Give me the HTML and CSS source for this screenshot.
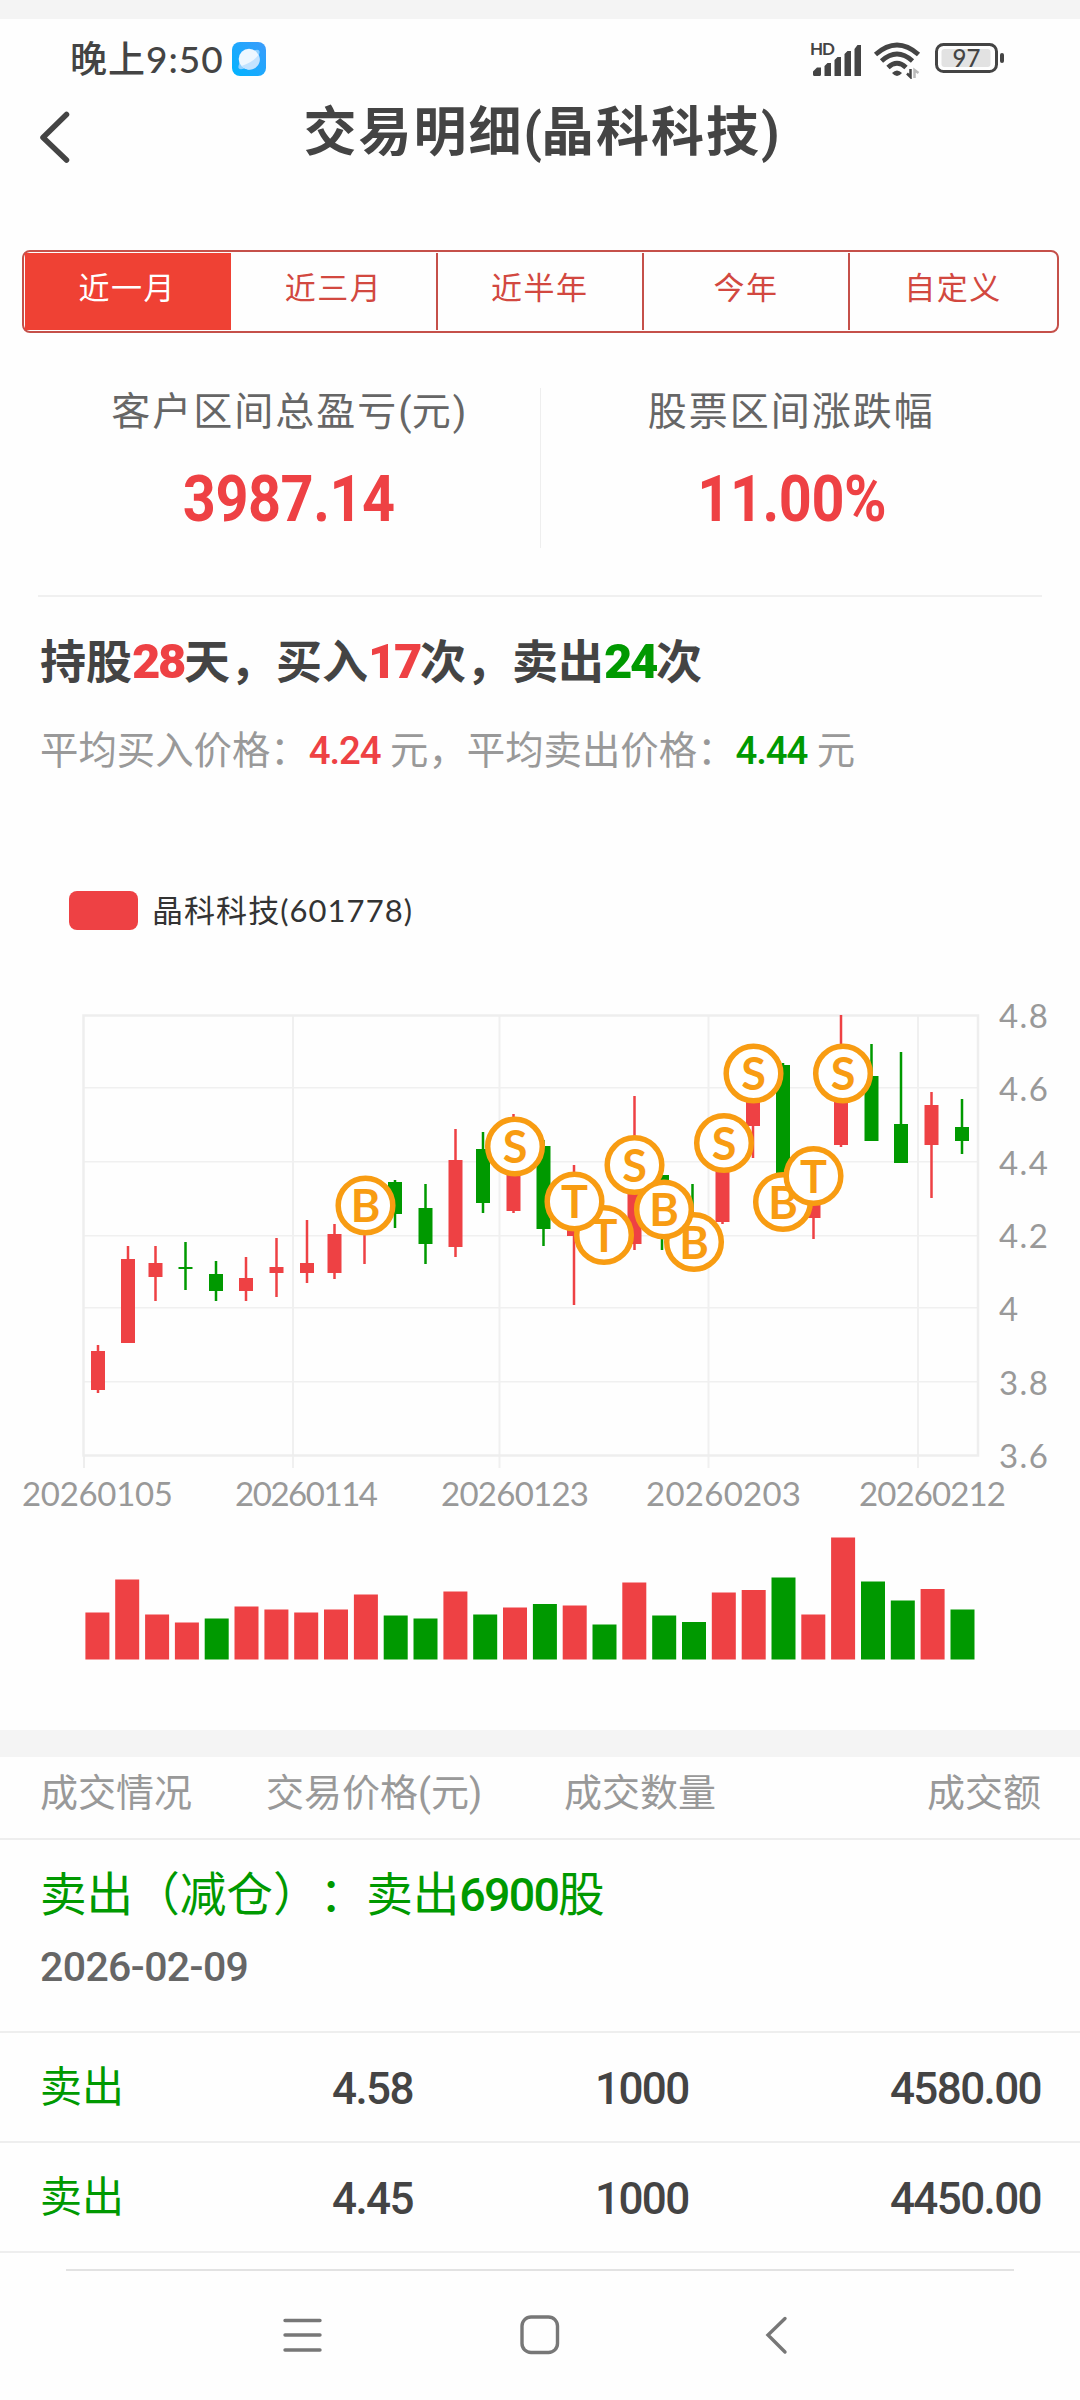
FILE: index.html
```html
<!DOCTYPE html>
<html lang="zh-CN">
<head>
	<meta charset="utf-8">
	<title>交易明细</title>
	<link rel="stylesheet" href="styles.css">
</head>
<body>
	<div class="top_strip"></div>
	<div class="status_bar">
		<span class="time">晚上9:50</span>
		<svg class="app_icon" width="34" height="34" viewBox="0 0 34 34">
			<defs>
				<linearGradient id="sky" x1="0" y1="1" x2="1" y2="0"><stop offset="0" stop-color="#00b4ff"/><stop offset="1" stop-color="#3d9bfb"/></linearGradient>
			</defs>
			<rect width="34" height="34" rx="8" fill="url(#sky)"/>
			<ellipse cx="17" cy="17.500" rx="13.500" ry="5" transform="rotate(-42 17 17.500)" fill="#8fd0ff"/>
			<circle cx="17" cy="17" r="10.300" fill="#eef7ff"/>
			<path d="M9.500 24Q22 20 26.500 12.500A10.300 10.300 0 0 1 9.500 24Z" fill="#c3e3ff"/>
		</svg>
		<svg class="signals" width="200" height="40" viewBox="808 40 200 40">
			<text class="hd" x="810" y="55.500" textLength="25">HD</text>
			<g fill="#444">
				<path d="M813 75.500v-3l4-4h4v7q0 1.500-1.500 1.500h-5q-1.500 0-1.500-1.500zM824.500 77v-10l3-3h3.500v13zM834.500 77v-16l3-3h3.500v19zM844.500 77v-22l3-3h3.500v25zM854.500 77v-27l3-4h3.500v31z"/>
				<path d="M892 74Q897 69 902 74Q897 80 892 74z"/>
			</g>
			<g fill="none" stroke="#444" stroke-width="4.800">
				<path d="M875.500 55.500Q897 36.500 918.500 55.500"/>
				<path d="M881.500 62Q897 48 912.500 62"/>
				<path d="M888 68.500Q897 60 906 68.500"/>
			</g>
			<path d="M910.500 70v8l-3.500-3.500" fill="none" stroke="#444" stroke-width="2.500"/>
			<path d="M914.500 79v-8l4 3" fill="none" stroke="#bbb" stroke-width="2.500"/>
			<rect x="936.500" y="45.500" width="60" height="27" rx="7" fill="none" stroke="#444" stroke-width="3"/>
			<rect x="941.500" y="50" width="49" height="18" rx="3" fill="#e2e2e2"/>
			<rect x="1000" y="54" width="4" height="10" rx="2" fill="#444"/>
			<text class="battery" x="966.500" y="67.500" text-anchor="middle">97</text>
		</svg>
	</div>

	<div class="header">
		<svg class="back" width="32" height="54" viewBox="0 0 32 54"><path d="M28.500 4.500L5 27.500L28.500 50" fill="none" stroke="#444" stroke-width="5.500" stroke-linecap="round" stroke-linejoin="round"/></svg>
		<h1>交易明细<i>(</i>晶科科技<i>)</i></h1>
	</div>

	<div class="tabs">
		<div class="tab active">近一月</div>
		<div class="tab">近三月</div>
		<div class="tab">近半年</div>
		<div class="tab">今年</div>
		<div class="tab">自定义</div>
	</div>

	<div class="stats">
		<div class="stat">
			<div class="label">客户区间总盈亏<i>(</i>元<i>)</i></div>
			<div class="value">3987.14</div>
		</div>
		<div class="stat">
			<div class="label">股票区间涨跌幅</div>
			<div class="value">11.00%</div>
		</div>
	</div>

	<div class="summary">
		<div class="counts">持股<b class="red">28</b>天，买入<b class="red">17</b>次，卖出<b class="green">24</b>次</div>
		<div class="prices">平均买入价格：<b class="red">4.24</b> 元，平均卖出价格：<b class="green">4.44</b> 元</div>
	</div>

	<svg class="chart" id="chart" width="1080" height="860" viewBox="0 870 1080 860"></svg>

	<div class="gap"></div>
	<div class="row table_head">
		<span>成交情况</span><span>交易价格<i>(</i>元<i>)</i></span><span>成交数量</span><span>成交额</span>
	</div>
	<div class="group">
		<div class="group_title">卖出（减仓）：卖出<b>6900</b>股</div>
		<div class="group_date">2026-02-09</div>
	</div>
	<div class="row trade">
		<span class="green">卖出</span><span>4.58</span><span>1000</span><span>4580.00</span>
	</div>
	<div class="row trade">
		<span class="green">卖出</span><span>4.45</span><span>1000</span><span>4450.00</span>
	</div>

	<div class="nav_bar">
		<svg width="40" height="40" viewBox="0 0 40 40"><path d="M3 5.500H38M3 20H38M3 35H38" stroke="#777" stroke-width="3.400" stroke-linecap="round"/></svg>
		<svg width="40" height="40" viewBox="0 0 40 40"><rect x="2" y="2" width="35.500" height="35.500" rx="9" fill="none" stroke="#777" stroke-width="3.400"/></svg>
		<svg width="40" height="40" viewBox="0 0 40 40"><path d="M27 3.500L10 20L27 37" fill="none" stroke="#777" stroke-width="3.400" stroke-linecap="round"/></svg>
	</div>

	<script src="chart.js"></script>
</body>
</html>
```
FILE: styles.css
```css
* {
	box-sizing: border-box;
}
body {
	margin: 0;
	width: 1080px;
	height: 2400px;
	overflow: hidden;
	background-color: #fefefe;
	color: #444;
	font-family: Roboto, "Noto Sans CJK SC", sans-serif;
}
i {
	font-style: normal;
}
.red {
	color: #ee4144;
}
.green {
	color: #009900;
}
.top_strip {
	height: 19px;
	background-color: #f4f4f4;
}
.status_bar {
	height: 81px;
	display: flex;
	align-items: center;
	padding: 0 72px 2px 70px;
}
.time {
	font: 500 37px/40px Lato, "Noto Sans CJK SC", sans-serif;
	letter-spacing: 1px;
	width: 162px;
	white-space: nowrap;
}
.signals {
	margin-left: auto;
}
.hd {
	font: bold 17px Lato, sans-serif;
	fill: #444;
}
.battery {
	font: 500 24px Lato, sans-serif;
	fill: #444;
}
.header {
	height: 150px;
	display: flex;
	padding: 0 38px;
}
.back {
	margin-top: 10px;
}
h1 {
	flex: 1;
	margin: 1px 30px 0 0;
	font-size: 53px;
	line-height: 64px;
	letter-spacing: 2px;
	text-align: center;
}
h1 i {
	letter-spacing: -1px;
}
.tabs {
	display: flex;
	margin: 0 21px 0 22px;
	height: 83px;
	border: 2px solid #c5504a;
	border-radius: 8px;
	padding: 1px;
}
.tab {
	width: 206.3px;
	border-right: 2px solid #c5504a;
	color: #d24840;
	font-size: 31px;
	line-height: 71px;
	letter-spacing: 1.5px;
	text-align: center;
}
.tab:last-child {
	flex: 1;
	border-right: 0;
}
.tab.active {
	background-color: #ef4134;
	border-color: #ef4134;
	color: #fff;
}
.stats {
	display: flex;
	height: 264px;
	margin: 0 38px;
	padding-top: 55px;
	border-bottom: 2px solid #f0f0f0;
}
.stat {
	flex: 1;
	height: 160px;
	text-align: center;
}
.stat:first-child {
	border-right: 1px solid #eee;
}
.label {
	color: #666;
	font-size: 39px;
	line-height: 48px;
	letter-spacing: 2px;
}
.label i {
	letter-spacing: 0;
}
.value {
	margin-top: 32px;
	color: #ee4144;
	font-size: 64px;
	font-weight: bold;
	line-height: 64px;
	letter-spacing: -0.5px;
	transform: scaleX(0.9);
}
.summary {
	height: 273px;
	padding: 35px 40px;
}
.counts {
	font-size: 46px;
	font-weight: bold;
	line-height: 60px;
}
.counts b {
	font-size: 49px;
	letter-spacing: -2.4px;
}
.prices {
	margin-top: 29px;
	color: #999;
	font-size: 38.4px;
	line-height: 60px;
}
.prices b {
	font-weight: 500;
	letter-spacing: -1.1px;
}
.chart {
	display: block;
}
.axis {
	font: 33px Lato, sans-serif;
	fill: #999;
}
.legend {
	font: 31px Lato, "Noto Sans CJK SC", sans-serif;
	fill: #333;
}
.mark {
	font: bold 45px Lato, sans-serif;
	fill: #f89c12;
}
.gap {
	height: 27px;
	background-color: #f4f4f4;
}
.row {
	display: grid;
	grid-template-columns: 226px 298px 220px 1fr;
	align-items: center;
	padding: 0 39px 0 40px;
	height: 110px;
	border-bottom: 2px solid #eee;
}
.row span:last-child {
	text-align: right;
}
.table_head {
	height: 83px;
	padding-bottom: 16px;
	color: #999;
	font-size: 38px;
}
.group {
	height: 193px;
	padding: 25px 40px;
	border-bottom: 2px solid #eee;
}
.group_title {
	color: #009900;
	font-size: 46.6px;
	line-height: 60px;
	text-spacing-trim: space-all;
}
.group_title b {
	font-weight: 500;
	letter-spacing: -1.8px;
}
.group_date {
	margin-top: 18px;
	color: #666;
	font-size: 41px;
	font-weight: 500;
	line-height: 48px;
	letter-spacing: -0.6px;
}
.trade {
	font-size: 44px;
	font-weight: 500;
	line-height: 60px;
	letter-spacing: -1.6px;
}
.trade span {
	padding-top: 3px;
}
.trade .green {
	padding: 2px 0 0;
	font-size: 42px;
	font-weight: normal;
	letter-spacing: 0;
}
.trade span:nth-child(2) {
	padding-left: 66px;
}
.trade span:nth-child(3) {
	padding-left: 31px;
}
.nav_bar {
	display: flex;
	justify-content: center;
	gap: 198px;
	margin: 16px 66px 0;
	padding-top: 44px;
	border-top: 2px solid #e2e2e2;
}
```
FILE: chart.js
```js
const RED = '#ee4144';
const GREEN = '#009900';

// x, high, low, body top, body bottom, colour
const candles = [
	[98, 1345, 1393, 1351, 1390, RED],
	[128, 1246, 1343, 1259, 1343, RED],
	[155.5, 1246, 1301, 1263, 1277, RED],
	[185.5, 1242, 1290, 1267, 1269, GREEN],
	[216, 1261, 1301, 1274, 1291, GREEN],
	[246, 1257, 1301, 1278, 1291, RED],
	[276.5, 1238, 1297, 1267, 1273, RED],
	[307, 1220, 1283, 1263, 1273, RED],
	[334.5, 1224, 1279, 1234, 1273, RED],
	[364.5, 1190, 1264, 1195, 1225, RED],
	[395, 1180, 1228, 1182, 1214, GREEN],
	[425.5, 1184, 1264, 1208, 1244, GREEN],
	[455.5, 1129, 1257, 1160, 1247, RED],
	[483, 1132, 1213, 1149, 1203, GREEN],
	[513.5, 1114, 1213, 1135, 1211, RED],
	[543.5, 1140, 1246, 1146, 1229, GREEN],
	[574, 1165, 1305, 1190, 1236, RED],
	[604, 1220, 1245, 1225, 1240, GREEN],
	[634.5, 1096, 1250, 1180, 1244, RED],
	[662, 1175, 1250, 1175, 1230, GREEN],
	[692.5, 1184, 1250, 1225, 1245, GREEN],
	[722.5, 1140, 1224, 1150, 1222, RED],
	[753, 1070, 1158, 1080, 1126, RED],
	[783, 1063, 1190, 1065, 1185, GREEN],
	[813.5, 1170, 1239, 1180, 1218, RED],
	[841, 1015, 1147, 1080, 1145, RED],
	[871.5, 1044, 1141, 1076, 1141, GREEN],
	[901, 1052, 1163, 1124, 1163, GREEN],
	[931.5, 1092, 1198, 1105, 1145, RED],
	[962, 1099, 1154, 1127, 1141, GREEN]
];

const volumes = [47, 80, 45, 37, 41, 53, 50, 47, 50, 65, 44, 41, 68, 45, 52, 55.5, 54, 35, 77, 44, 37.5, 67, 69.5, 82, 45, 122, 78, 59, 70.5, 50];
const volumeColors = 'RRRRGRRRRRGGRGRGRGRGGRRGRRGGRG';

const marks = [
	['B', 365.5, 1205.5], ['S', 515, 1146.5], ['T', 604, 1235], ['T', 574.5, 1201.5],
	['S', 634.5, 1165], ['B', 694, 1242], ['B', 664, 1209.5], ['S', 724, 1143],
	['S', 753.5, 1073.5], ['B', 783, 1202], ['T', 813.5, 1176], ['S', 843, 1073.5]
];

const yAxis = [['4.8', 1028], ['4.6', 1101], ['4.4', 1175], ['4.2', 1248], ['4', 1321], ['3.8', 1395], ['3.6', 1468]];
const xAxis = [['20260105', 22, 151], ['20260114', 235, 143], ['20260123', 441, 148], ['20260203', 646, 155], ['20260212', 859, 147]];

function rect(x, y, w, h, fill, rx) {
	return `<rect x="${x}" y="${y}" width="${w}" height="${h}" fill="${fill}" rx="${rx || 0}"/>`;
}

let out = rect(69, 891, 69, 39, RED, 8);
out += '<text class="legend" x="152" y="921.500" textLength="260">晶科科技(601778)</text>';

[1088, 1162, 1236, 1308, 1382].forEach(y => out += rect(84, y - 1, 894, 1.5, '#f0f0f0'));
[293, 499.5, 708.5, 918].forEach(x => out += rect(x - 1, 1016, 2, 452, '#f0f0f0'));
out += rect(83, 1455, 2, 13, '#eee');
out += '<rect x="83.5" y="1015.5" width="894.500" height="440" fill="none" stroke="#eee" stroke-width="2.500"/>';

candles.forEach(([x, high, low, top, bottom, color]) => {
	out += rect(x - 1.25, high, 2.5, low - high, color);
	out += rect(x - 7, top, 14, bottom - top, color);
});

marks.forEach(([t, x, y]) => {
	out += `<circle cx="${x}" cy="${y}" r="27.300" fill="#fff" stroke="#f89c12" stroke-width="5.500"/>`;
	out += `<text class="mark" x="${x}" y="${y + 16.5}" text-anchor="middle">${t}</text>`;
});

yAxis.forEach(([t, y]) => out += `<text class="axis" x="999" y="${y}" textLength="${t.length > 1 ? 49 : 19}">${t}</text>`);
xAxis.forEach(([t, x, w]) => out += `<text class="axis" x="${x}" y="1505.500" textLength="${w}">${t}</text>`);

volumes.forEach((h, i) => {
	out += rect((85.4 + i * 29.83).toFixed(1), 1659.5 - h, 24, h, volumeColors[i] == 'R' ? RED : GREEN);
});

document.getElementById('chart').innerHTML = out;
```
